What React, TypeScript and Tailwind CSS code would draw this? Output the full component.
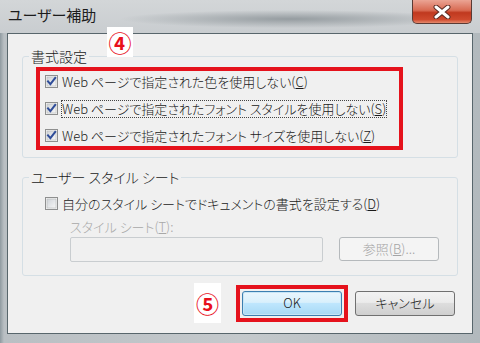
import React from 'react'

function Check({ checked }: { checked: boolean }) {
  return (
    <svg width="13" height="13" viewBox="0 0 13 13" className="shrink-0">
      <defs>
        <linearGradient id="cbg" x1="0" y1="0" x2="1" y2="1">
          <stop offset="0" stopColor="#cfd3d8" />
          <stop offset="1" stopColor="#f7f7f7" />
        </linearGradient>
      </defs>
      <rect x="0.5" y="0.5" width="12" height="12" fill="#f4f4f4" stroke="#8e8f8f" />
      <rect x="2" y="2" width="9" height="9" fill="url(#cbg)" stroke="#b6b8ba" strokeWidth="0.6" />
      {checked && (
        <path d="M3 6.3 L5.4 9.2 L10.2 3" fill="none" stroke="#2f4d99" strokeWidth="2" strokeLinecap="square" />
      )}
    </svg>
  )
}

function Circled({ n }: { n: string }) {
  return (
    <span className="text-[23px] font-bold leading-none text-[#e8101c] font-['Noto_Sans_CJK_JP',sans-serif]">
      {n}
    </span>
  )
}

export default function App() {
  return (
    <div className="relative w-[480px] h-[343px] overflow-hidden bg-[linear-gradient(90deg,#8f9aa0_0px,#b9bfc3_4px,#c4c9cc_50%,#b2b9bd_100%)] text-[#1a1a1a] font-light font-['Noto_Sans_CJK_JP',sans-serif] [font-feature-settings:'palt']">
      {/* title bar */}
      <div className="h-[33px] flex items-start justify-between bg-[radial-gradient(ellipse_170px_9px_at_290px_19px,#959ca0,transparent),linear-gradient(180deg,#d3d6d8,#c9cdd0)]">
        <div className="pl-[8px] pt-[5px] text-[15px] leading-[20px] font-normal text-[#1c1c1c]">ユーザー補助</div>
        <div className="mr-[8px] w-[60px] h-[24px] rounded-b-[5px] border border-t-0 border-[#5a3a34] bg-[linear-gradient(180deg,#eba494_0%,#d86a52_45%,#c0391f_55%,#cf4a2e_85%,#e58a6e_100%)] flex items-center justify-center">
          <svg width="18" height="14" viewBox="0 0 18 14">
            <path d="M3 2 L15 12 M15 2 L3 12" stroke="#5a2a22" strokeWidth="5" strokeLinecap="round" />
            <path d="M3 2 L15 12 M15 2 L3 12" stroke="#ffffff" strokeWidth="3" strokeLinecap="round" />
          </svg>
        </div>
      </div>

      {/* client area */}
      <div className="mx-[7px] h-[301px] border border-[#58666c] bg-[#f0f0f0] flex flex-col">
        <fieldset className="mx-[14px] mt-[13px] border border-[#d5dfe5] rounded-[3px] pb-[7px]">
          <legend className="ml-[6px] px-[2px] text-[14px] leading-[18px]">書式設定</legend>
          <div className="ml-[13px] mt-[2px] w-[367px] border-[4px] border-[#e5121c] pl-[5px] flex flex-col gap-[6px] text-[13px]">
            <label className="h-[21px] flex items-center gap-[4px]">
              <Check checked />
              <span>Web ページで指定された色を使用しない(<span className="underline">C</span>)</span>
            </label>
            <label className="h-[21px] flex items-center gap-[4px]">
              <Check checked />
              <span className="outline-1 outline-dotted outline-[#444] leading-[16px]">
                Web ページで指定されたフォント スタイルを使用しない(<span className="underline">S</span>)
              </span>
            </label>
            <label className="h-[21px] flex items-center gap-[4px]">
              <Check checked />
              <span>Web ページで指定されたフォント サイズを使用しない(<span className="underline">Z</span>)</span>
            </label>
          </div>
        </fieldset>

        <fieldset className="mx-[14px] mt-[10px] border border-[#d5dfe5] rounded-[3px] pb-[13px]">
          <legend className="ml-[6px] px-[2px] text-[14px] leading-[18px]">ユーザー スタイル シート</legend>
          <label className="ml-[22px] mt-[7px] h-[21px] flex items-center gap-[4px] text-[13px]">
            <Check checked={false} />
            <span>自分のスタイル シートでドキュメントの書式を設定する(<span className="underline">D</span>)</span>
          </label>
          <div className="ml-[47px] mt-[4px] h-[18px] text-[13px] leading-[18px] text-[#a8a8a8]">
            スタイル シート(<span className="underline">T</span>):
          </div>
          <div className="ml-[47px] mt-[1px] flex gap-[16px]">
            <div className="w-[253px] h-[25px] border border-[#c9cdd0] rounded-[2px] bg-[#f0f0f0]" />
            <div className="w-[100px] h-[24px] border border-[#b5b9bc] rounded-[3px] bg-[#f4f4f4] flex items-center justify-center text-[13px] text-[#a4a4a4]">
              参照(<span className="underline">B</span>)...
            </div>
          </div>
        </fieldset>

        <div className="mt-[7px] pr-[17px] flex items-center justify-end">
          <div className="w-[27px] h-[40px] bg-white flex items-center justify-center">
            <Circled n="⑤" />
          </div>
          <div className="ml-[15px] border-[4px] border-[#e5121c] p-[2px]">
            <div className="w-[100px] h-[25px] border border-[#3c7fb1] rounded-[3px] bg-[linear-gradient(180deg,#eaf6fd_0%,#d9f0fc_45%,#bee6fd_50%,#a7d9f5_100%)] shadow-[inset_0_0_0_1px_#c8e6f6] flex items-center justify-center text-[13px]">
              OK
            </div>
          </div>
          <div className="ml-[7px] w-[100px] h-[25px] border border-[#707070] rounded-[3px] bg-[linear-gradient(180deg,#f2f2f2_0%,#ebebeb_45%,#dddddd_50%,#cfcfcf_100%)] flex items-center justify-center text-[13px]">
            キャンセル
          </div>
        </div>
      </div>

      {/* annotation badge ④ */}
      <div className="absolute left-[107px] top-[27px] w-[26px] h-[30px] bg-white flex items-center justify-center">
        <Circled n="④" />
      </div>
    </div>
  )
}
